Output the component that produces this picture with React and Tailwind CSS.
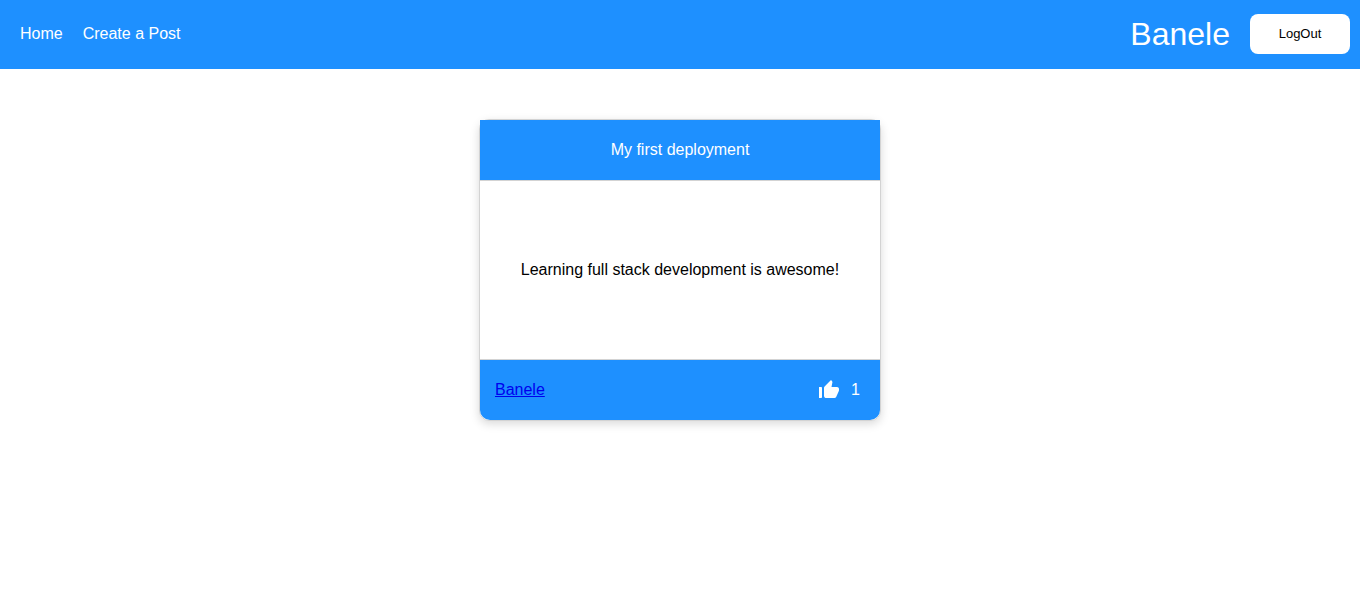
function ThumbUpIcon() {
  return (
    <svg viewBox="0 0 24 24" className="size-6" fill="currentColor" aria-hidden="true">
      <path d="M2 20h2c.55 0 1-.45 1-1v-9c0-.55-.45-1-1-1H2v11zm19.83-7.12c.11-.25.17-.52.17-.8V11c0-1.1-.9-2-2-2h-5.5l.92-4.65c.05-.22.02-.46-.08-.66-.23-.45-.52-.86-.88-1.22L14 2 7.59 8.41C7.21 8.79 7 9.3 7 9.83v7.84C7 18.95 8.05 20 9.34 20h8.11c.7 0 1.36-.37 1.72-.97l2.66-6.15z" />
    </svg>
  );
}

function NavBar() {
  return (
    <header className="flex h-[69px] items-center justify-between bg-[#1e90ff] pr-2.5 pb-0.5 pl-5 text-white">
      <nav className="flex gap-5">
        <a href="#home">Home</a>
        <a href="#create">Create a Post</a>
      </nav>
      <div className="flex items-center gap-5">
        <h1 className="text-[32px] leading-9">Banele</h1>
        <button type="button" className="h-10 w-[100px] rounded-lg bg-white text-[13px] text-black">
          LogOut
        </button>
      </div>
    </header>
  );
}

function Post({ title, text, author, likes }) {
  return (
    <article className="flex min-h-[302px] w-full max-w-[402px] flex-col rounded-[10px] border border-[#d3d3d3] shadow-[0_3px_10px_rgba(0,0,0,0.15)]">
      <h2 className="grid h-[60px] place-items-center bg-[#1e90ff] text-white">{title}</h2>
      <p className="grid flex-1 place-items-center border-y border-[#d3d3d3]">{text}</p>
      <footer className="flex h-[60px] items-center justify-between rounded-b-[10px] bg-[#1e90ff] pr-5 pl-[15px] text-white">
        <a href="#profile" className="text-[#0000ee] underline">{author}</a>
        <div className="flex items-center gap-2.5">
          <button type="button" aria-label="Like">
            <ThumbUpIcon />
          </button>
          <span>{likes}</span>
        </div>
      </footer>
    </article>
  );
}

export default function App() {
  return (
    <div className="font-['Liberation_Sans',Arial,sans-serif] text-base text-black">
      <NavBar />
      <main className="flex justify-center py-[50px]">
        <Post
          title="My first deployment"
          text="Learning full stack development is awesome!"
          author="Banele"
          likes={1}
        />
      </main>
    </div>
  );
}
